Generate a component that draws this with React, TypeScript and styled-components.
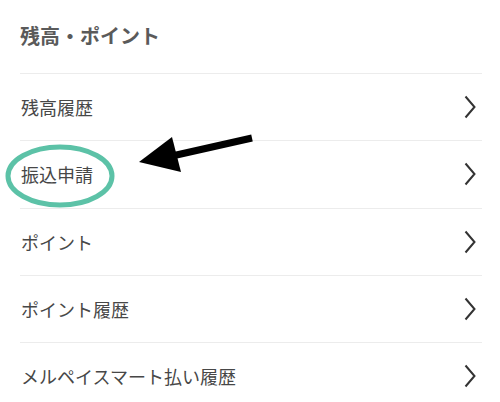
import React from "react";
import styled, { createGlobalStyle } from "styled-components";

const Global = createGlobalStyle`
  html, body { margin: 0; padding: 0; background: #fff; }
  body { font-family: "Noto Sans CJK JP", "Noto Sans", sans-serif; }
`;

const Page = styled.div`
  position: relative;
  width: 500px;
  height: 402px;
  overflow: hidden;
  background: #fff;
`;

const Section = styled.section`
  display: flex;
  flex-direction: column;
  margin: 0 18px 0 20px;
`;

const Header = styled.h2`
  margin: 0;
  height: 73px;
  display: flex;
  align-items: center;
  padding-bottom: 3px;
  box-sizing: border-box;
  font-size: 20px;
  font-weight: 700;
  color: #5a5a5a;
  letter-spacing: 0;
`;

const Row = styled.div`
  display: flex;
  align-items: center;
  justify-content: space-between;
  height: 67.3px;
  box-sizing: border-box;
  border-top: 1px solid #ececec;
`;

const Label = styled.span`
  font-size: 18px;
  color: #474747;
  margin-left: 1px;
`;

const Chevron = styled.svg`
  width: 12px;
  height: 24px;
  margin-right: 6px;
  flex: none;
`;

const Overlay = styled.svg`
  position: absolute;
  left: 0;
  top: 0;
  pointer-events: none;
`;

const items = ["残高履歴", "振込申請", "ポイント", "ポイント履歴", "メルペイスマート払い履歴"];

export default function App() {
  return (
    <Page>
      <Global />
      <Section>
        <Header>残高・ポイント</Header>
        {items.map((t) => (
          <Row key={t}>
            <Label>{t}</Label>
            <Chevron viewBox="0 0 12 24">
              <polyline points="1.5,1.5 10.5,12 1.5,22.5" fill="none" stroke="#333" strokeWidth="2" strokeLinejoin="miter" />
            </Chevron>
          </Row>
        ))}
      </Section>
      <Overlay width="500" height="402" viewBox="0 0 500 402">
        <ellipse cx="60" cy="176" rx="52" ry="29" fill="none" stroke="#5cc2a7" strokeWidth="5" />
        <line x1="252" y1="138" x2="172" y2="156" stroke="#000" strokeWidth="7" />
        <polygon points="139,162 172,137 181,172" fill="#000" />
      </Overlay>
    </Page>
  );
}
